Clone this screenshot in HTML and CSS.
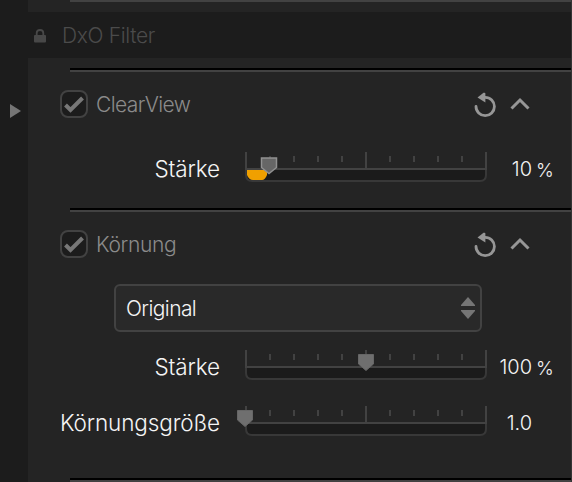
FILE: index.html
```html
<!DOCTYPE html>
<html lang="de">

<head>
	<meta charset="UTF-8" />
	<meta name="viewport" content="width=device-width, initial-scale=1.0" />
	<title>DxO Filter</title>
	<link rel="stylesheet" href="styles.css">
</head>

<body>
	<!-- shared shapes -->
	<svg class="defs" width="0" height="0">
		<symbol id="check" viewBox="0 0 24 24">
			<path d="M3.5 13 L8.5 18 L20.5 6" fill="none" stroke="#777" stroke-width="4" />
		</symbol>
		<symbol id="reset" viewBox="0 0 24 26">
			<path d="M3 14.5 A9.2 9.2 0 1 0 12.2 5.3" fill="none" stroke="#969696" stroke-width="2.8" stroke-linecap="round" />
			<path d="M4.5 5.5 L10.5 0.8 Q12.4 0.2 12.4 1.8 V10.6 Z" fill="#969696" />
		</symbol>
		<symbol id="chevron" viewBox="0 0 20 14">
			<path d="M1.5 11.5 L10 3 L18.5 11.5" fill="none" stroke="#969696" stroke-width="3" />
		</symbol>
		<symbol id="track" viewBox="0 0 258 30">
			<path d="M9 17 H249 V23 Q249 29 243 29 H15 Q9 29 9 23 Z" fill="#1b1b1b" />
			<path d="M9 16 V23 Q9 29 15 29 H243 Q249 29 249 23 V16" fill="none" stroke="#383838" stroke-width="2" />
			<path d="M9 0 V17 M249 0 V17 M8 17 H250 M129 0 V16" fill="none" stroke="#424242" stroke-width="2" />
			<path d="M33 4 V10 M57 4 V10 M81 4 V10 M105 4 V10 M153 4 V10 M177 4 V10 M201 4 V10 M225 4 V10" stroke="#424242" stroke-width="2" />
		</symbol>
	</svg>

	<div class="sidebar">
		<svg class="expand" width="11" height="14"><path d="M0 0 L11 7 L0 14 Z" fill="#757575" /></svg>
	</div>

	<div class="panel">
		<div class="header">
			<svg class="lock" width="12" height="14" viewBox="0 0 12 14">
				<path d="M2.7 7 V4 Q2.7 1 6 1 Q9.3 1 9.3 4 V7" fill="none" stroke="#484848" stroke-width="1.8" />
				<rect y="6" width="12" height="7.5" rx="1" fill="#484848" />
			</svg>
			<span class="header-title">DxO Filter</span>
		</div>

		<div class="section clearview">
			<div class="title-row">
				<span class="checkbox"><svg width="24" height="24"><use href="#check" /></svg></span>
				<span class="title title-clearview">ClearView</span>
				<svg class="reset" width="24" height="26"><use href="#reset" /></svg>
				<svg class="chevron" width="20" height="14"><use href="#chevron" /></svg>
			</div>
			<div class="slider-row">
				<span class="label">Stärke</span>
				<svg class="slider" width="258" height="30">
					<use href="#track" />
					<path d="M10 18 H30 V23 Q28 28 25 28 H16 Q12 28 10 23 Z" fill="#f0a000" />
					<path d="M24.5 6 H39.500 V15.5 L32 21.5 L24.5 15.5 Z" fill="#666" stroke="#919191" stroke-width="1.5" />
				</svg>
				<span class="value">10</span>
				<span class="unit">%</span>
			</div>
		</div>

		<div class="section grain">
			<div class="title-row">
				<span class="checkbox"><svg width="24" height="24"><use href="#check" /></svg></span>
				<span class="title title-grain">Körnung</span>
				<svg class="reset" width="24" height="26"><use href="#reset" /></svg>
				<svg class="chevron" width="20" height="14"><use href="#chevron" /></svg>
			</div>
			<div class="select">
				<span class="select-text">Original</span>
				<svg width="14" height="22"><path d="M7 0 L14 8 V9 H0 V8 Z M0 13 H14 V14 L7 22 L0 14 Z" fill="#757575" /></svg>
			</div>
			<div class="slider-row">
				<span class="label">Stärke</span>
				<svg class="slider" width="258" height="30">
					<use href="#track" />
					<path d="M121.5 4.5 H136.5 V14 L129 20.5 L121.5 14 Z" fill="#6f6f6f" stroke="#666" />
				</svg>
				<span class="value">100</span>
				<span class="unit">%</span>
			</div>
			<div class="slider-row">
				<span class="label">Körnungsgröße</span>
				<svg class="slider" width="258" height="30">
					<use href="#track" />
					<path d="M0.5 4.5 H15.5 V14 L8 20.5 L0.5 14 Z" fill="#6f6f6f" stroke="#666" />
				</svg>
				<span class="value">1.0</span>
			</div>
		</div>
		<div class="section"></div>
	</div>
</body>

</html>
```
FILE: styles.css
```css
* {
	box-sizing: border-box;
}

body {
	display: flex;
	width: 572px;
	height: 482px;
	margin: 0;
	overflow: hidden;
	background-color: #242424;
	font-family: Inter, "Liberation Sans", sans-serif;
	font-weight: 300;
	font-size: 21px;
	color: #f5f5f5;
	white-space: nowrap;
}

svg {
	display: block;
	flex-shrink: 0;
}

.defs {
	position: absolute;
}

.sidebar {
	width: 28px;
	height: 482px;
	padding: 104px 0 0 10px;
	background-color: #1c1c1c;
}

.panel {
	width: 544px;
	height: 482px;
	border-right: 1px solid #353535;
}

.panel::before {
	content: "";
	display: block;
	height: 2px;
	margin: 0 0 10px 42px;
	background-color: #424242;
}

.header {
	display: flex;
	align-items: center;
	height: 46px;
	margin-bottom: 10px;
	padding-left: 6px;
	background-color: #1c1c1c;
	color: #4b4b4b;
}

.lock {
	margin-top: 2px;
}

.header-title {
	margin-left: 16px;
	letter-spacing: -0.35px;
}

/* black line with a grey one below it */
.section::before {
	content: "";
	display: block;
	height: 2px;
	margin-left: 42px;
	border-top: 2px solid #000;
	background-color: #424242;
}

.clearview {
	height: 140px;
}

.grain {
	height: 270px;
}

.title-row {
	display: flex;
	align-items: center;
	height: 28px;
	margin-top: 18px;
	padding-left: 32px;
}

.checkbox {
	width: 28px;
	height: 28px;
	border: 2px solid #424242;
	border-radius: 8px;
	background-color: #1c1c1c;
}

.title {
	width: 377px;
	margin-left: 8px;
	color: #8b8b8b;
}

.title-clearview {
	letter-spacing: -0.6px;
}

.title-grain {
	letter-spacing: -0.35px;
}

.reset {
	margin-top: 2px;
}

.chevron {
	margin-left: 13px;
}

.slider-row {
	display: flex;
	align-items: center;
	height: 30px;
	margin-top: 26px;
}

.clearview .slider-row {
	margin-top: 34px;
}

.label {
	width: 192px;
	padding-top: 2px;
	text-align: right;
	font-size: 22.5px;
	letter-spacing: -0.1px;
}

.slider {
	margin-left: 17px;
}

.value {
	width: 37px;
	padding-top: 4px;
	text-align: right;
	font-size: 20px;
}

.unit {
	margin-left: 4px;
	padding-top: 7px;
	font-size: 19px;
}

.select {
	display: flex;
	align-items: center;
	justify-content: space-between;
	width: 368px;
	height: 48px;
	margin: 26px 0 18px 86px;
	padding: 0 5px 0 10px;
	border: 2px solid #424242;
	border-radius: 6px;
	background-color: #292929;
	letter-spacing: -0.6px;
}

.select + .slider-row {
	margin-top: 18px;
}
```
